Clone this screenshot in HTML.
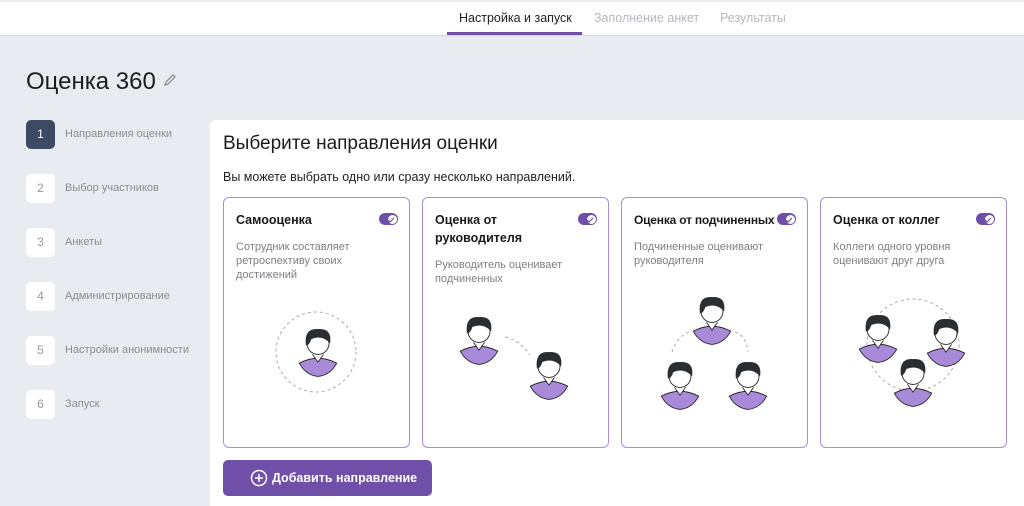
<!DOCTYPE html>
<html><head><meta charset="utf-8"><style>
*{box-sizing:border-box;margin:0;padding:0}
html,body{width:1024px;height:506px;overflow:hidden}
body{background:#e8ebef;font-family:"Liberation Sans","Noto Sans CJK SC",sans-serif;position:relative}
.top{position:absolute;left:0;top:0;width:1024px;height:36px;background:#fff;border-bottom:1px solid #d3d6db;border-top:2px solid #eceef1}
.tab{position:absolute;top:11px;font-size:12.5px;color:#b5b8bd}
.tab.a{color:#222}
.ul{position:absolute;left:447px;top:32px;width:135px;height:3px;background:#6f4fa8}
h1{position:absolute;left:26px;top:68px;font-size:24px;font-weight:400;color:#1c1c1c}
.step{position:absolute;left:26px;width:29px;height:29px;border-radius:5px;background:#fff;color:#999;font-size:12px;text-align:center;line-height:29px}
.step.a{background:#3d4a63;color:#fff}
.sl{position:absolute;left:65px;font-size:11px;color:#8a8d92}
.panel{position:absolute;left:210px;top:120px;width:814px;height:386px;background:#fff;border-radius:6px 0 0 0}
h2{position:absolute;left:223px;top:133px;font-size:19px;font-weight:400;color:#1c1c1c}
.sub{position:absolute;left:223px;top:170px;font-size:12.5px;color:#222}
.card{position:absolute;top:197px;width:187px;height:251px;border:1.5px solid #a48fd6;border-radius:6px;padding:13px 12px}
.card b{display:block;font-size:12.5px;color:#1a1a1a;line-height:18px;width:140px}
.card p{font-size:11px;color:#7d7f84;line-height:14px;margin-top:11px}
.tg{position:absolute;right:11px;top:15px;width:19px;height:12px;border-radius:6px;background:#6b4fa8}
.tg:after{content:"";position:absolute;right:1.5px;top:1.5px;width:9px;height:9px;border-radius:50%;background:#fff}
.btn{position:absolute;left:223px;top:460px;width:209px;height:36px;background:#6f4fa8;border-radius:5px;color:#fff;font-size:12.5px;font-weight:bold;line-height:36px;padding-left:49px}
svg.ill{position:absolute;left:0;top:0}
</style></head><body>
<div class="top"></div>
<div class="tab a" style="left:459px">Настройка и запуск</div>
<div class="tab" style="left:594px">Заполнение анкет</div>
<div class="tab" style="left:720px">Результаты</div>
<div class="ul"></div>
<h1>Оценка 360</h1>
<svg style="position:absolute;left:163px;top:73px" width="14" height="14" viewBox="0 0 14 14"><path d="M2 12 L3 9 L10 2 L12 4 L5 11 Z" fill="none" stroke="#888" stroke-width="1.2"/></svg>
<div class="step a" style="top:120px">1</div><div class="sl" style="top:128px">Направления оценки</div>
<div class="step" style="top:174px">2</div><div class="sl" style="top:182px">Выбор участников</div>
<div class="step" style="top:228px">3</div><div class="sl" style="top:236px">Анкеты</div>
<div class="step" style="top:282px">4</div><div class="sl" style="top:290px">Администрирование</div>
<div class="step" style="top:336px">5</div><div class="sl" style="top:344px">Настройки анонимности</div>
<div class="step" style="top:390px">6</div><div class="sl" style="top:398px">Запуск</div>
<div class="panel"></div>
<h2>Выберите направления оценки</h2>
<div class="sub">Вы можете выбрать одно или сразу несколько направлений.</div>
<div class="card" style="left:223px"><b>Самооценка</b><div class="tg"></div><p>Сотрудник составляет ретроспективу своих достижений</p></div>
<div class="card" style="left:422px"><b>Оценка от руководителя</b><div class="tg"></div><p>Руководитель оценивает подчиненных</p></div>
<div class="card" style="left:621px"><b style="width:150px;font-size:12px;letter-spacing:-0.2px">Оценка от подчиненных</b><div class="tg"></div><p>Подчиненные оценивают руководителя</p></div>
<div class="card" style="left:820px"><b>Оценка от коллег</b><div class="tg"></div><p>Коллеги одного уровня оценивают друг друга</p></div>
<div class="btn">Добавить направление</div>
<svg style="position:absolute;left:250px;top:469px" width="18" height="18" viewBox="0 0 18 18"><circle cx="9" cy="9" r="7.5" fill="none" stroke="#fff" stroke-width="1.5"/><path d="M9 5V13M5 9H13" stroke="#fff" stroke-width="1.5"/></svg>
<svg class="ill" width="1024" height="506">
<defs><g id="av" transform="scale(1.1)">
<path d="M-17 12 Q0 3 17 12 Q11 23 0 24 Q-11 23 -17 12Z" fill="#a98ad8" stroke="#222" stroke-width="0.8"/>
<path d="M-5 4 L0 11 L5 4" fill="#fff" stroke="#222" stroke-width="0.8"/>
<circle cx="0" cy="-6" r="10" fill="#fff" stroke="#222" stroke-width="0.8"/>
<path d="M-11 -4 Q-13 -20 0 -19 Q13 -20 11 -6 Q4 -14 -6 -10 Q-8 -4 -11 -4Z" fill="#2a2d31"/>
</g></defs>
<g fill="none" stroke="#aaa" stroke-dasharray="3 3" stroke-width="1">
<circle cx="316" cy="352" r="40"/>
<path d="M505 337 Q520 340 530 355"/>
<path d="M672 352 Q678 335 690 332 M735 332 Q746 335 748 352"/>
<circle cx="913" cy="345" r="46"/>
</g>
<use href="#av" x="318" y="350"/>
<use href="#av" x="479" y="338"/>
<use href="#av" x="549" y="373"/>
<use href="#av" x="712" y="318"/>
<use href="#av" x="680" y="383"/>
<use href="#av" x="748" y="383"/>
<use href="#av" x="878" y="336"/>
<use href="#av" x="946" y="340"/>
<use href="#av" x="913" y="380"/>
<g fill="none" stroke="#6b4fa8" stroke-width="1.2">
<path d="M388 220 l2 2 l4 -4"/><path d="M587 220 l2 2 l4 -4"/><path d="M786 220 l2 2 l4 -4"/><path d="M985 220 l2 2 l4 -4"/>
</g>
</svg>
</body></html>
